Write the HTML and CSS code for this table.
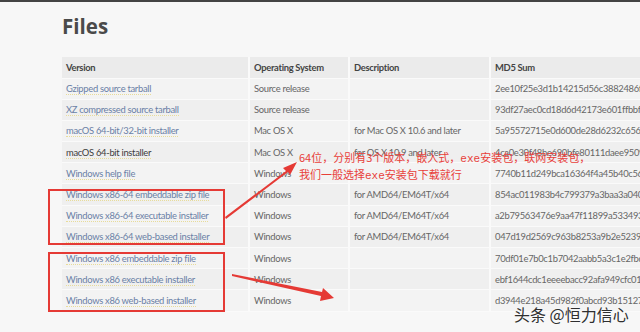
FILE: index.html
```html
<!DOCTYPE html>
<html>
<head>
<meta charset="utf-8">
<link rel="stylesheet" href="styles.css">
</head>
<body>
<div class="topbar"></div>
<div class="page">
  <h1 class="title">Files</h1>
  <table class="files">
    <thead>
      <tr><th class="c1">Version</th><th class="c2">Operating System</th><th class="c3">Description</th><th class="c4">MD5 Sum</th></tr>
    </thead>
    <tbody>
      <tr><td><a class="lk">Gzipped source tarball</a></td><td>Source release</td><td></td><td>2ee10f25e3d1b14215d56c3882486fcf</td></tr>
      <tr><td><a class="lk">XZ compressed source tarball</a></td><td>Source release</td><td></td><td>93df27aec0cd18d6d42173e601ffbbfd</td></tr>
      <tr><td><a class="lk">macOS 64-bit/32-bit installer</a></td><td>Mac OS X</td><td>for Mac OS X 10.6 and later</td><td>5a95572715e0d600de28d6232c656954</td></tr>
      <tr><td><a class="lk dark">macOS 64-bit installer</a></td><td>Mac OS X</td><td>for OS X 10.9 and later</td><td>4ca0e30f48be690bfe80111daee9509a</td></tr>
      <tr><td><a class="lk">Windows help file</a></td><td>Windows</td><td></td><td>7740b11d249bca16364f4a45b40c5676</td></tr>
      <tr><td><a class="lk">Windows x86-64 embeddable zip file</a></td><td>Windows</td><td>for AMD64/EM64T/x64</td><td>854ac011983b4c799379a3baa3a040ec</td></tr>
      <tr><td><a class="lk">Windows x86-64 executable installer</a></td><td>Windows</td><td>for AMD64/EM64T/x64</td><td>a2b79563476e9aa47f11899a53349383</td></tr>
      <tr><td><a class="lk">Windows x86-64 web-based installer</a></td><td>Windows</td><td>for AMD64/EM64T/x64</td><td>047d19d2569c963b8253a9b2e52395ec</td></tr>
      <tr><td><a class="lk">Windows x86 embeddable zip file</a></td><td>Windows</td><td></td><td>70df01e7b0c1b7042aabb5a3c1e2fbd5</td></tr>
      <tr><td><a class="lk">Windows x86 executable installer</a></td><td>Windows</td><td></td><td>ebf1644cdc1eeeebacc92afa949cfc01</td></tr>
      <tr><td><a class="lk">Windows x86 web-based installer</a></td><td>Windows</td><td></td><td>d3944e218a45d982f0abcd93b1512734</td></tr>
    </tbody>
  </table>

  <div class="box box1"></div>
  <div class="box box2"></div>
  <svg class="arrows" width="640" height="332" viewBox="0 0 640 332">
    <polygon points="225,217 286,171 283,168 297,162 290,175 288,172 226,219" fill="#e53a35"/>
    <polygon points="232,274 322,292 323,288 334,298 320,301 321,296 232,276" fill="#e53a35"/>
  </svg>
  <div class="note">64位，分别有3个版本，嵌入式，<span class="ex">exe</span>安装包，联网安装包，<br>我们一般选择<span class="ex">exe</span>安装包下载就行</div>
  <div class="mark">头条 @恒力信心</div>
</div>
</body>
</html>
```
FILE: styles.css
```css
html, body {
  margin: 0;
  padding: 0;
  width: 640px;
  height: 332px;
  overflow: hidden;
  background: #f7f7f7;
}
.topbar {
  height: 2px;
  background: #444;
}
.page {
  position: relative;
  padding-left: 62px;
  height: 330px;
  font-family: "Lato", "Noto Sans", sans-serif;
}
.title {
  margin: 0;
  padding-top: 10px;
  height: 55px;
  box-sizing: border-box;
  font-family: "Open Sans", sans-serif;
  font-weight: 700;
  font-size: 20.5px;
  line-height: 28px;
  color: #4a4a4a;
}
.files {
  border-collapse: collapse;
  table-layout: fixed;
  width: 640px;
  font-size: 9.4px;
  letter-spacing: -0.3px;
  color: #666;
}
.files th, .files td {
  height: 21.2px;
  padding: 0 0 0 4px;
  text-align: left;
  white-space: nowrap;
  overflow: hidden;
  border-left: 2px solid #fafafa;
  border-bottom: 1px solid #fafafa;
  box-sizing: border-box;
}
.files th:first-child, .files td:first-child { border-left: none; }
.files th {
  background: #ebebeb;
  color: #444;
  font-weight: 700;
  height: 21px;
}
.c1 { width: 187px; }
.c2 { width: 100px; }
.c3 { width: 141px; }
.c4 { width: 212px; }
.files tbody tr { background: #f3f3f3; }
.files tbody tr:nth-child(even) { background: #efefef; }
.lk {
  color: #6a7fa6;
  border-bottom: 1px dotted #e8dc9a;
}
.lk.dark { color: #3d3d3d; }
.box {
  position: absolute;
  left: 48px;
  width: 177px;
  border: 2px solid #e53a35;
  box-sizing: border-box;
}
.box1 { top: 187px; height: 56px; }
.box2 { top: 250px; height: 60px; }
.arrows {
  position: absolute;
  left: 0;
  top: -2px;
}
.note {
  position: absolute;
  left: 299px;
  top: 148px;
  font-family: "Noto Sans CJK SC", sans-serif;
  font-size: 11px;
  line-height: 15px;
  color: #e8403a;
  white-space: nowrap;
}
.ex { font-family: "Liberation Mono", monospace; }
.mark {
  position: absolute;
  left: 514px;
  top: 302px;
  font-family: "Noto Sans CJK SC", sans-serif;
  font-size: 16px;
  line-height: 20px;
  color: #2f2f2f;
  text-shadow: 0 0 2px #fff;
  white-space: nowrap;
}
```
